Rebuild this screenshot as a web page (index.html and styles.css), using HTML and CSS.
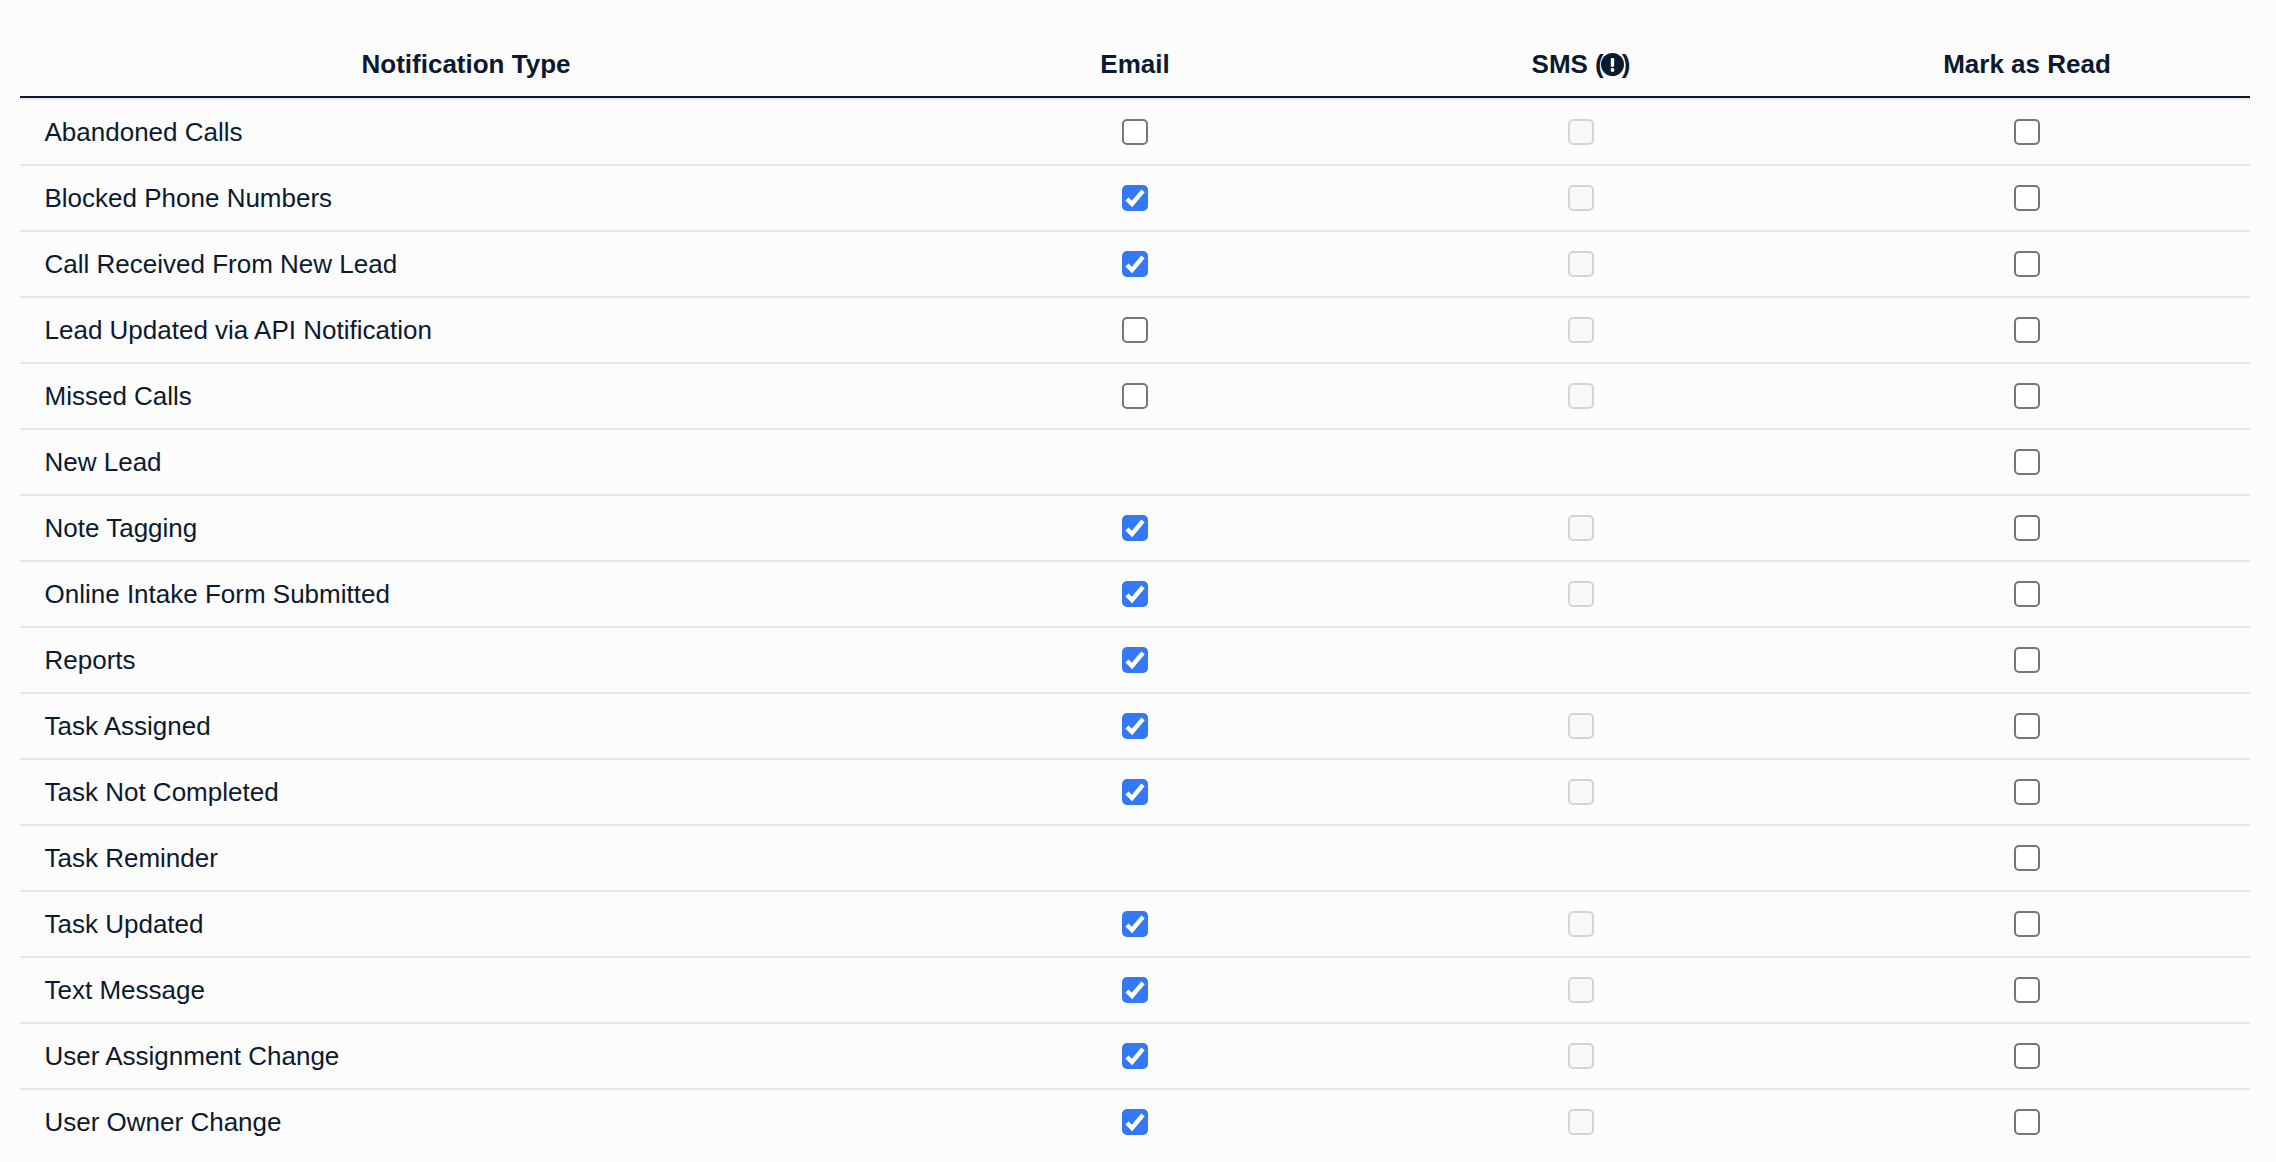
FILE: index.html
```html
<!DOCTYPE html>
<html lang="en">
<head>
<meta charset="utf-8">
<title>Notification Settings</title>
<link rel="stylesheet" href="styles.css">
</head>
<body>
<table class="table">
<colgroup><col class="col-name"><col class="col-opt"><col class="col-opt"><col class="col-opt"></colgroup>
<thead>
<tr>
<th>Notification Type</th>
<th>Email</th>
<th><span class="sms">SMS (<svg class="alert" viewBox="0 0 23 23" aria-hidden="true"><circle cx="11.5" cy="11.5" r="11.5" fill="#0b1a2e"/><rect x="9.8" y="5" width="3.4" height="9" rx="1.4" fill="#fff"/><circle cx="11.5" cy="17" r="1.9" fill="#fff"/></svg>)</span></th>
<th>Mark as Read</th>
</tr>
</thead>
<tbody>
<tr><td>Abandoned Calls</td><td><input type="checkbox" class="cb"></td><td><input type="checkbox" class="cb" disabled></td><td><input type="checkbox" class="cb"></td></tr>
<tr><td>Blocked Phone Numbers</td><td><input type="checkbox" class="cb" checked></td><td><input type="checkbox" class="cb" disabled></td><td><input type="checkbox" class="cb"></td></tr>
<tr><td>Call Received From New Lead</td><td><input type="checkbox" class="cb" checked></td><td><input type="checkbox" class="cb" disabled></td><td><input type="checkbox" class="cb"></td></tr>
<tr><td>Lead Updated via API Notification</td><td><input type="checkbox" class="cb"></td><td><input type="checkbox" class="cb" disabled></td><td><input type="checkbox" class="cb"></td></tr>
<tr><td>Missed Calls</td><td><input type="checkbox" class="cb"></td><td><input type="checkbox" class="cb" disabled></td><td><input type="checkbox" class="cb"></td></tr>
<tr><td>New Lead</td><td></td><td></td><td><input type="checkbox" class="cb"></td></tr>
<tr><td>Note Tagging</td><td><input type="checkbox" class="cb" checked></td><td><input type="checkbox" class="cb" disabled></td><td><input type="checkbox" class="cb"></td></tr>
<tr><td>Online Intake Form Submitted</td><td><input type="checkbox" class="cb" checked></td><td><input type="checkbox" class="cb" disabled></td><td><input type="checkbox" class="cb"></td></tr>
<tr><td>Reports</td><td><input type="checkbox" class="cb" checked></td><td></td><td><input type="checkbox" class="cb"></td></tr>
<tr><td>Task Assigned</td><td><input type="checkbox" class="cb" checked></td><td><input type="checkbox" class="cb" disabled></td><td><input type="checkbox" class="cb"></td></tr>
<tr><td>Task Not Completed</td><td><input type="checkbox" class="cb" checked></td><td><input type="checkbox" class="cb" disabled></td><td><input type="checkbox" class="cb"></td></tr>
<tr><td>Task Reminder</td><td></td><td></td><td><input type="checkbox" class="cb"></td></tr>
<tr><td>Task Updated</td><td><input type="checkbox" class="cb" checked></td><td><input type="checkbox" class="cb" disabled></td><td><input type="checkbox" class="cb"></td></tr>
<tr><td>Text Message</td><td><input type="checkbox" class="cb" checked></td><td><input type="checkbox" class="cb" disabled></td><td><input type="checkbox" class="cb"></td></tr>
<tr><td>User Assignment Change</td><td><input type="checkbox" class="cb" checked></td><td><input type="checkbox" class="cb" disabled></td><td><input type="checkbox" class="cb"></td></tr>
<tr><td>User Owner Change</td><td><input type="checkbox" class="cb" checked></td><td><input type="checkbox" class="cb" disabled></td><td><input type="checkbox" class="cb"></td></tr>
</tbody>
</table>
</body>
</html>
```
FILE: styles.css
```css
html, body {
  margin: 0;
  background: #fcfcfc;
}
body {
  padding: 0 26px 0 20px;
  font-family: "Liberation Sans", Arial, sans-serif;
  color: #0b1a2e;
  overflow: hidden;
}
.table {
  width: 2230px;
  table-layout: fixed;
  border-collapse: separate;
  border-spacing: 0;
}
.col-name { width: 40%; }
.col-opt { width: 20%; }
th {
  height: 98px;
  box-sizing: border-box;
  padding: 49px 0 17px;
  font-size: 26px;
  line-height: 30px;
  font-weight: 700;
  text-align: center;
  vertical-align: middle;
  border-bottom: 2px solid #0b1a2e;
}
td {
  height: 66px;
  box-sizing: border-box;
  padding: 0;
  font-size: 26px;
  line-height: 30px;
  text-align: center;
  vertical-align: middle;
  border-top: 2px solid #e7e7e7;
}
td:first-child {
  text-align: left;
  padding-left: 24.5px;
}
.sms {
  display: inline-flex;
  align-items: center;
  white-space: pre;
}
.alert {
  width: 23px;
  height: 23px;
  margin: 0 -2.5px;
}
.cb {
  appearance: none;
  display: block;
  width: 26px;
  height: 26px;
  margin: 0 auto;
  box-sizing: border-box;
  border: 2px solid #767676;
  border-radius: 5px;
  background: #fff;
}
.cb:checked {
  border: 0;
  background: #3478f6 url("data:image/svg+xml,%3Csvg xmlns='http://www.w3.org/2000/svg' viewBox='0 0 26 26'%3E%3Cpath d='M5 14 10 19 21 5.8' fill='none' stroke='%23fff' stroke-width='4.4'/%3E%3C/svg%3E") center / 26px 26px no-repeat;
}
.cb:disabled {
  border-color: #d4d4d4;
  background: #f8f8f8;
}
```
